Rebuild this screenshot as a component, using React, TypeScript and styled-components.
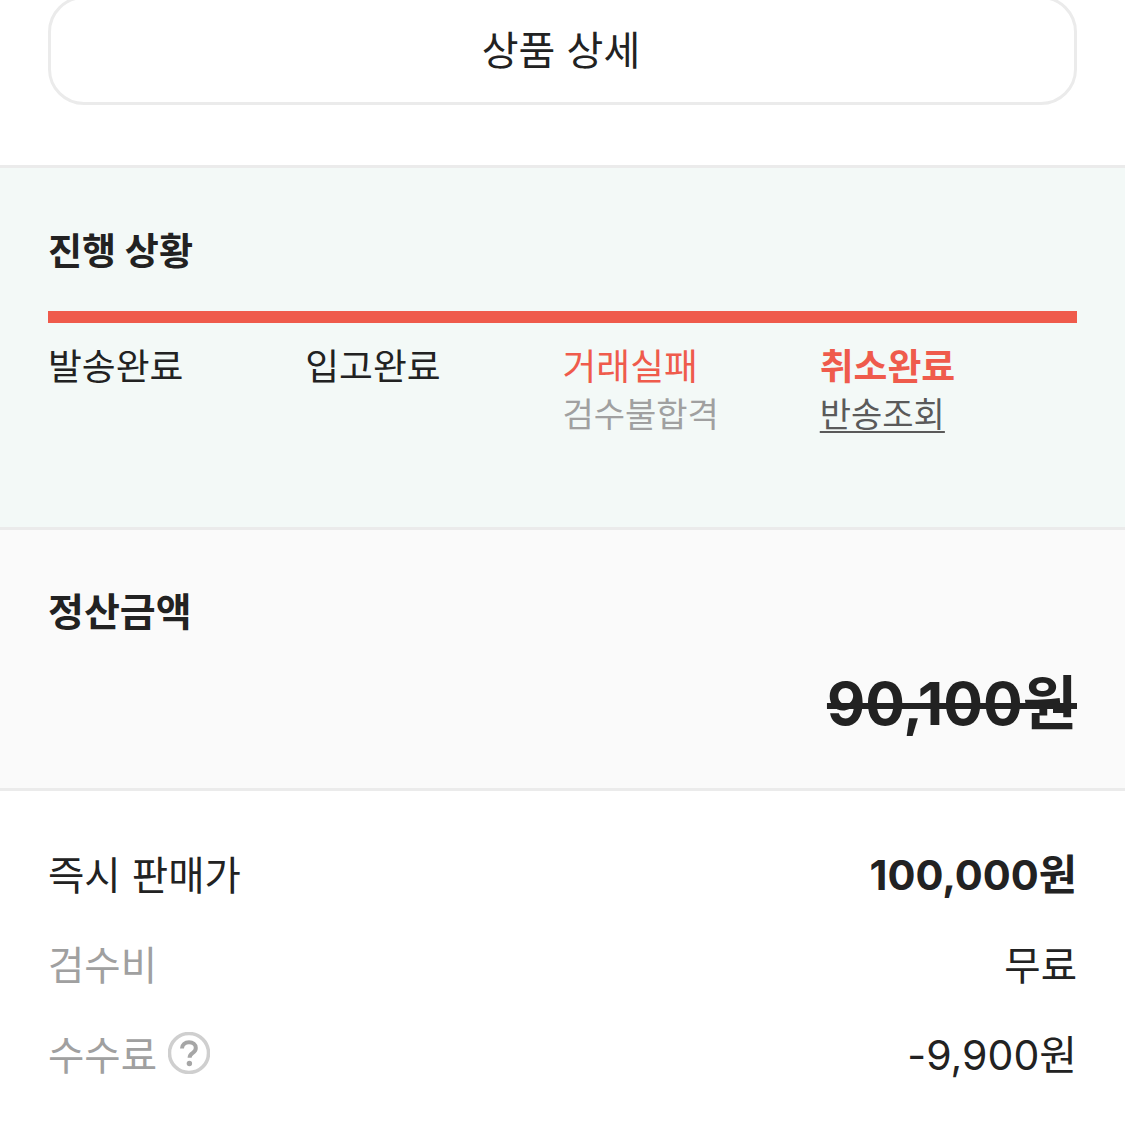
import styled, { createGlobalStyle } from 'styled-components';

const GlobalStyle = createGlobalStyle`
  html, body {
    margin: 0;
    padding: 0;
    background: #fff;
  }
  body {
    font-family: Inter, "Noto Sans CJK KR", sans-serif;
    color: #222;
    overflow: hidden;
  }
`;

const Page = styled.div`
  width: 1125px;
  height: 1126px;
  overflow: hidden;
`;

const ButtonArea = styled.div`
  margin-top: -4px;
  padding: 0 48px 60px;
`;

const DetailButton = styled.button`
  display: block;
  width: 100%;
  height: 109px;
  box-sizing: border-box;
  padding: 0 3px 6px 0;
  background: #fff;
  border: 3px solid #ebebeb;
  border-radius: 36px;
  color: #222;
  font-family: inherit;
  font-size: 40px;
  font-weight: 400;
`;

const Section = styled.section<{ $bg: string; $height: number }>`
  height: ${(p) => p.$height}px;
  box-sizing: border-box;
  padding: 0 48px;
  background: ${(p) => p.$bg};
  border-top: 3px solid #ebebeb;
  display: flex;
  flex-direction: column;
`;

const SectionTitle = styled.h3<{ $size: number; $top: number }>`
  margin: ${(p) => p.$top}px 0 0;
  height: 54px;
  font-size: ${(p) => p.$size}px;
  line-height: 54px;
  font-weight: 700;
  color: #222;
`;

const ProgressBar = styled.div`
  margin-top: 32px;
  height: 12px;
  background: #ef5b4c;
`;

const Steps = styled.div`
  display: grid;
  grid-template-columns: repeat(4, 257.25px);
  margin-top: 19px;
`;

const Step = styled.div`
  display: flex;
  flex-direction: column;
`;

const StepTitle = styled.span<{ $tone?: 'fail' | 'done' }>`
  height: 49px;
  font-size: 36.8px;
  line-height: 50px;
  white-space: nowrap;
  color: ${(p) => (p.$tone ? '#ef5b4c' : '#222')};
  font-weight: ${(p) => (p.$tone === 'done' ? 700 : 400)};
`;

const StepNote = styled.span`
  height: 48px;
  font-size: 34px;
  line-height: 48px;
  color: #a0a0a0;
  white-space: nowrap;
`;

const StepLink = styled.a`
  align-self: flex-start;
  height: 48px;
  font-size: 34px;
  line-height: 48px;
  color: #5a5a5a;
  text-decoration: underline;
  text-decoration-thickness: 2px;
  text-underline-offset: 4px;
  white-space: nowrap;
`;

const Total = styled.div`
  margin-top: 29px;
  align-self: flex-end;
  font-size: 59px;
  line-height: 72px;
  font-weight: 700;
  color: #222;
  text-decoration: line-through;
  text-decoration-thickness: 6px;
  white-space: nowrap;
`;

const Rows = styled.div`
  border-top: 3px solid #ebebeb;
  padding: 51px 48px 0;
  display: flex;
  flex-direction: column;
  gap: 30px;
`;

const Row = styled.div`
  height: 60px;
  display: flex;
  align-items: center;
  justify-content: space-between;
`;

const RowLabel = styled.span<{ $muted?: boolean }>`
  display: flex;
  align-items: center;
  gap: 11px;
  font-size: 39.5px;
  color: ${(p) => (p.$muted ? '#a0a0a0' : '#222')};
`;

const RowValue = styled.span<{ $bold?: boolean; $size: number }>`
  font-size: ${(p) => p.$size}px;
  font-weight: ${(p) => (p.$bold ? 700 : 400)};
  color: #222;
`;

const HelpSvg = styled.svg`
  margin-top: 2px;
`;

const HelpIcon = () => (
  <HelpSvg width="42" height="42" viewBox="0 0 42 42" fill="none">
    <circle cx="21" cy="21" r="19.5" stroke="#cfcfcf" strokeWidth="3.5" />
    <path
      d="M14 16.5c0-3.8 3-6.2 7-6.2 3.9 0 6.8 2.3 6.8 5.6 0 2.6-1.4 3.9-3.3 5.2-1.9 1.3-2.9 2.3-2.9 4.6"
      stroke="#a6a6a6"
      strokeWidth="4"
    />
    <circle cx="21.4" cy="31.5" r="2.7" fill="#a6a6a6" />
  </HelpSvg>
);

export default function App() {
  return (
    <Page>
      <GlobalStyle />
      <ButtonArea>
        <DetailButton>상품 상세</DetailButton>
      </ButtonArea>

      <Section $bg="#f3f9f7" $height={362}>
        <SectionTitle $size={37} $top={57}>진행 상황</SectionTitle>
        <ProgressBar />
        <Steps>
          <Step>
            <StepTitle>발송완료</StepTitle>
          </Step>
          <Step>
            <StepTitle>입고완료</StepTitle>
          </Step>
          <Step>
            <StepTitle $tone="fail">거래실패</StepTitle>
            <StepNote>검수불합격</StepNote>
          </Step>
          <Step>
            <StepTitle $tone="done">취소완료</StepTitle>
            <StepLink>반송조회</StepLink>
          </Step>
        </Steps>
      </Section>

      <Section $bg="#fafafa" $height={261}>
        <SectionTitle $size={39} $top={55}>정산금액</SectionTitle>
        <Total>90,100원</Total>
      </Section>

      <Rows>
        <Row>
          <RowLabel>즉시 판매가</RowLabel>
          <RowValue $bold $size={41.5}>100,000원</RowValue>
        </Row>
        <Row>
          <RowLabel $muted>검수비</RowLabel>
          <RowValue $size={39.5}>무료</RowValue>
        </Row>
        <Row>
          <RowLabel $muted>
            수수료
            <HelpIcon />
          </RowLabel>
          <RowValue $size={41}>-9,900원</RowValue>
        </Row>
      </Rows>
    </Page>
  );
}
